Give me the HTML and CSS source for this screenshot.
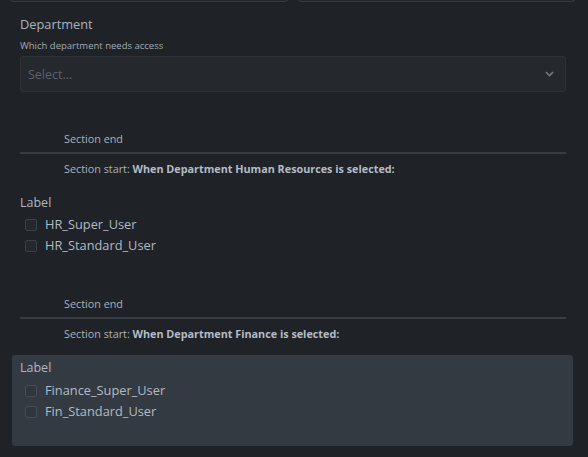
FILE: index.html
```html
<!DOCTYPE html>
<html>
<head>
<meta charset="utf-8">
<link rel="stylesheet" href="styles.css">
</head>
<body>
<div class="top-row">
  <div class="top-box"></div>
  <div class="top-box"></div>
</div>
<div class="form">
  <div class="field">
    <div class="field-title">Department</div>
    <div class="field-help">Which department needs access</div>
    <div class="select">
      <span class="placeholder">Select...</span>
      <svg class="chev" width="9" height="6" viewBox="0 0 9 6"><path d="M1 1.2 L4.5 4.6 L8 1.2" fill="none" stroke="#6b7480" stroke-width="1.8"/></svg>
    </div>
  </div>

  <div class="section-end">Section end</div>
  <div class="section-start">Section start: <b>When Department Human Resources is selected:</b></div>

  <div class="group">
    <div class="group-label">Label</div>
    <label class="check"><span class="box"></span>HR_Super_User</label>
    <label class="check"><span class="box"></span>HR_Standard_User</label>
  </div>

  <div class="section-end second">Section end</div>
  <div class="section-start">Section start: <b>When Department Finance is selected:</b></div>

  <div class="group highlight">
    <div class="group-label">Label</div>
    <label class="check"><span class="box"></span>Finance_Super_User</label>
    <label class="check"><span class="box"></span>Fin_Standard_User</label>
  </div>
</div>
</body>
</html>
```
FILE: styles.css
```css
html, body {
  margin: 0;
  padding: 0;
  background: #1f2226;
  width: 588px;
  height: 457px;
  overflow: hidden;
  font-family: "Open Sans", "Noto Sans", sans-serif;
  color: #aeb7c2;
}
.top-row {
  display: flex;
  gap: 10px;
  padding: 0 13px 0 10px;
  margin-top: -18px;
}
.top-box {
  flex: 1;
  height: 20px;
  border: 1px solid #363b42;
  border-top: none;
  border-radius: 0 0 3px 3px;
  background: #23272b;
  box-sizing: border-box;
}
.form {
  padding: 0 22px 0 20px;
}
.field {
  padding-top: 12px;
}
.field-title {
  font-size: 12.8px;
  line-height: 20px;
  color: #aab4c1;
}
.field-help {
  font-size: 9.5px;
  line-height: 14px;
  margin-top: 5px;
  color: #a2abb6;
}
.select {
  margin-top: 3px;
  height: 36px;
  box-sizing: border-box;
  border: 1px solid #2d3238;
  border-radius: 3px;
  background: #25292d;
  display: flex;
  align-items: center;
  justify-content: space-between;
  padding: 0 11px 0 7px;
}
.placeholder {
  font-size: 12.5px;
  color: #59616b;
}
.section-end {
  margin-top: 40px;
  padding-left: 44px;
  font-size: 10.8px;
  line-height: 14px;
  color: #a9b2bd;
  padding-bottom: 6px;
  border-bottom: 2px solid #383d44;
}
.section-end.second {
  margin-top: 41px;
}
.section-start {
  padding-left: 44px;
  font-size: 10.8px;
  line-height: 14px;
  margin-top: 8px;
  color: #a9b2bd;
}
.section-start b {
  font-weight: 700;
  color: #b3bcc7;
}
.group {
  margin-top: 18px;
}
.group-label {
  font-size: 12.5px;
  line-height: 18px;
  margin-bottom: 2px;
  color: #aeb7c2;
}
.check {
  display: flex;
  align-items: center;
  gap: 8px;
  padding-left: 5px;
  font-size: 12.8px;
  line-height: 21px;
  color: #b1bac5;
}
.box {
  width: 12px;
  height: 12px;
  box-sizing: border-box;
  border: 1px solid #3b4148;
  border-radius: 2px;
  background: #24282c;
}
.group.highlight {
  margin: 14px -7px 0 -8px;
  padding: 4px 7px 24px 8px;
  background: #343a41;
  border-radius: 3px;
}
.highlight .group-label {
  margin-bottom: 3px;
}
.highlight .box {
  background: #30363c;
  border-color: #454c54;
}
```
